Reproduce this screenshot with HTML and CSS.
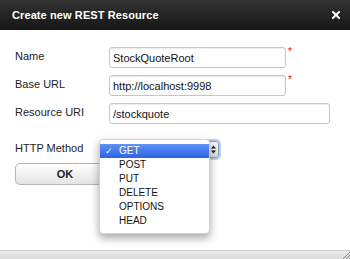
FILE: index.html
```html
<!DOCTYPE html>
<html lang="en">
<head>
    <meta charset="UTF-8">
    <title>Create new REST Resource</title>
    <link rel="stylesheet" href="styles.css">
</head>
<body>
    <div class="dialog">
        <!-- title bar -->
        <div class="titlebar">
            <span class="title">Create new REST Resource</span>
            <svg class="close" width="8" height="8" viewBox="0 0 8 8">
                <path d="M1 1L7 7M7 1L1 7" stroke="#fff" stroke-width="2" stroke-linecap="square"/>
            </svg>
        </div>

        <div class="content">
            <div class="form">
                <label class="field-label">Name</label>
                <div class="field">
                    <input class="text-input short" type="text" value="StockQuoteRoot">
                    <span class="required">*</span>
                </div>

                <label class="field-label">Base URL</label>
                <div class="field">
                    <input class="text-input short" type="text" value="http://localhost:9998">
                    <span class="required">*</span>
                </div>

                <label class="field-label">Resource URI</label>
                <div class="field">
                    <input class="text-input long" type="text" value="/stockquote">
                </div>

                <label class="field-label method-label">HTTP Method</label>
                <div class="field method-field">
                    <div class="select">
                        <span class="select-value">GET</span>
                        <span class="select-arrows">
                            <svg width="5" height="9" viewBox="0 0 5 9">
                                <path d="M0 3.5L2.5 0.5L5 3.5Z M0 5.5L2.5 8.5L5 5.5Z" fill="#222"/>
                            </svg>
                        </span>
                    </div>
                </div>
            </div>

            <button class="ok-button">OK</button>

            <!-- open popup of the select -->
            <ul class="select-menu">
                <li class="menu-item selected"><span class="check">&#10003;</span>GET</li>
                <li class="menu-item">POST</li>
                <li class="menu-item">PUT</li>
                <li class="menu-item">DELETE</li>
                <li class="menu-item">OPTIONS</li>
                <li class="menu-item">HEAD</li>
            </ul>
        </div>

        <div class="statusbar">
            <svg class="grip" width="8" height="8" viewBox="0 0 8 8">
                <path d="M8 1L1 8M8 4L4 8M8 7L7 8" stroke="#8a8a8a" stroke-width="1"/>
            </svg>
        </div>
    </div>
</body>
</html>
```

FILE: styles.css
```css
body {
    margin: 0;
    font-family: "Liberation Sans", Arial, sans-serif;
    font-size: 11px;
    color: #222;
    background: #fff;
}
.dialog {
    display: flex;
    flex-direction: column;
    height: 259px;
}
.titlebar {
    height: 30px;
    display: flex;
    align-items: center;
    justify-content: space-between;
    padding: 0 10px 0 12px;
    background: linear-gradient(#333 0%, #242424 50%, #161616 100%);
    flex-shrink: 0;
}
.title {
    color: #fff;
    font-weight: bold;
    font-size: 11px;
    letter-spacing: 0.1px;
}
.close {
    display: block;
}
.content {
    flex: 1;
    position: relative;
    padding: 17px 0 0 15px;
}
.form {
    display: grid;
    grid-template-columns: 94px auto;
    row-gap: 7px;
    align-items: center;
}
.field-label {
    color: #222;
    padding-bottom: 4px; /* labels sit a little above the field centre */
}
.field {
    display: flex;
    align-items: flex-start;
}
.text-input {
    box-sizing: border-box;
    height: 21px;
    padding: 0 3px;
    border: 1px solid #c6c6c6;
    border-radius: 3px;
    box-shadow: inset 0 1px 1px rgba(0, 0, 0, 0.08);
    font-family: inherit;
    font-size: 11px;
    color: #111;
    background: #fff;
}
.short {
    width: 177px;
}
.long {
    width: 221px;
}
.required {
    color: #e01010;
    font-size: 10px;
    line-height: 10px;
    margin-left: 2px;
}
.method-label {
    margin-top: 10px;
}
.method-field {
    margin-top: 10px;
}
.select {
    box-sizing: border-box;
    width: 110px;
    height: 17px;
    display: flex;
    align-items: center;
    justify-content: space-between;
    padding-left: 8px;
    border: 1px solid #7c9ccc;
    border-radius: 3px;
    box-shadow: 0 0 0 2px rgba(120, 160, 220, 0.5);
    background: linear-gradient(#fafafa, #dcdcdc);
}
.select-arrows {
    display: flex;
    align-items: center;
    justify-content: center;
    width: 9px;
    height: 100%;
}
.select-arrows svg {
    display: block;
}
.ok-button {
    margin-top: 5px;
    width: 100px;
    height: 22px;
    border: 1px solid #b5b5b5;
    border-radius: 5px;
    background: linear-gradient(#ffffff, #e4e4e4);
    font-family: inherit;
    font-weight: bold;
    font-size: 11px;
    color: #222;
    padding: 0;
}
.select-menu {
    position: absolute;
    left: 99px;
    top: 109px;
    width: 111px;
    box-sizing: border-box;
    margin: 0;
    padding: 4px 0 5px;
    list-style: none;
    background: #fff;
    border: 1px solid #d2d2d2;
    border-radius: 4px;
    box-shadow: 0 4px 9px rgba(0, 0, 0, 0.35);
}
.menu-item {
    height: 14px;
    line-height: 14px;
    padding-left: 19px;
    font-size: 10px;
    color: #111;
    position: relative;
}
.menu-item.selected {
    color: #fff;
    background: linear-gradient(#5f93f3, #2e63e4);
}
.check {
    position: absolute;
    left: 5px;
    top: 0;
    font-family: "DejaVu Sans", sans-serif;
    font-size: 9px;
}
.statusbar {
    height: 8px;
    flex-shrink: 0;
    display: flex;
    justify-content: flex-end;
    align-items: flex-end;
    border-top: 1px solid #cfcfcf;
    background: linear-gradient(#ececec, #dadada);
}
.grip {
    display: block;
}
```
